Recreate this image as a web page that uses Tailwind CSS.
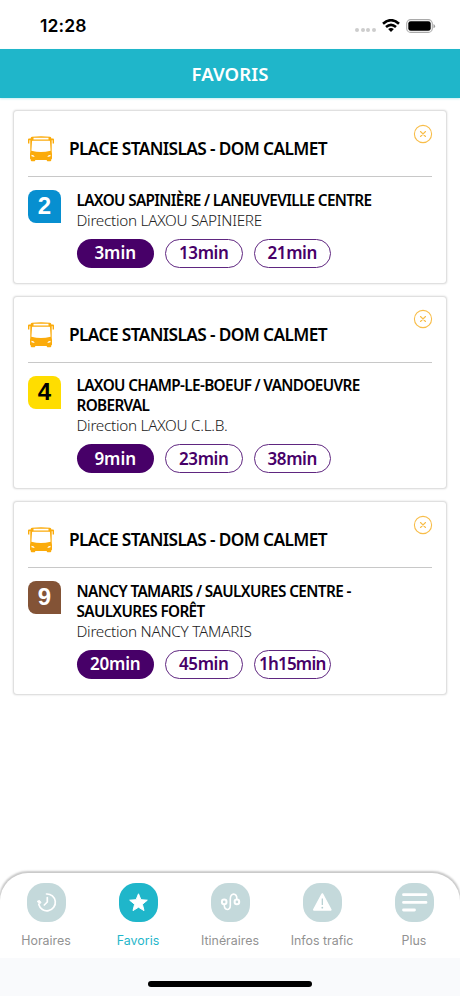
<!DOCTYPE html>
<html lang="fr">
<head>
<meta charset="utf-8">
<title>Favoris</title>
<script src="https://cdn.jsdelivr.net/npm/@tailwindcss/browser@4"></script>
</head>
<body class="bg-white">
<svg class="hidden">
  <symbol id="bus" viewBox="0 0 26 26">
    <path fill="currentColor" fill-rule="evenodd" d="M4 .8Q13-.5 22 .8Q23.3 1 23.4 2.4H25Q26 2.4 26 3.5V7.4H24.6V4.2H23.7V15.5L24 18V22.6Q24 23.3 23.2 23.5V24.5Q23.2 25.3 22.3 25.3H19.6Q18.8 25.3 18.7 23.9H7.3Q7.2 25.3 6.4 25.3H3.7Q2.8 25.3 2.8 24.5V23.5Q2 23.3 2 22.6V18L2.3 15.5V4.2H1.4V7.4H0V3.5Q0 2.4 1 2.4H2.6Q2.7 1 4 .8ZM5.5 1.7V3.6H20.5V1.7ZM4.5 4.7Q4 4.7 4 5.4L3.4 14.8Q13 17.2 22.6 14.8L22 5.4Q22 4.7 21.5 4.7ZM3.5 18.8V20.3L6.5 21Q6.8 19.3 3.5 18.8ZM22.5 18.8V20.3L19.5 21Q19.2 19.3 22.5 18.8Z"/>
  </symbol>
  <symbol id="close" viewBox="0 0 20 20">
    <g fill="none" stroke="currentColor" stroke-width="1.1"><circle cx="10" cy="10" r="8.6"/><path d="M7.5 7.5l5 5M12.5 7.5l-5 5" stroke-linecap="round"/></g>
  </symbol>
</svg>
<div class="w-[460px] h-[996px] overflow-hidden flex flex-col bg-white font-['Noto_Sans',sans-serif] text-black">
  <div class="h-[49px] shrink-0 flex items-center pl-10 pr-6 pt-[2px]">
    <span class="font-['Inter',sans-serif] font-semibold text-[17.5px] leading-5 tracking-[0.1px]">12:28</span>
    <div class="ml-auto flex items-center">
      <div class="flex gap-[1.6px] mt-[9px] mr-[6px]">
        <i class="size-1 rounded-full bg-[#cdcdcd]"></i><i class="size-1 rounded-full bg-[#cdcdcd]"></i><i class="size-1 rounded-full bg-[#cdcdcd]"></i><i class="size-1 rounded-full bg-[#cdcdcd]"></i>
      </div>
      <svg class="w-[18px] h-[13px] mr-[6px]" viewBox="0 0 18 13"><g fill="none" stroke="#000" stroke-width="2.6"><path d="M1 4.8Q9-2.4 17 4.8"/><path d="M4 8Q9 3.6 14 8"/></g><path d="M6.1 10Q9 7.8 11.9 10L9 12.9Z"/></svg>
      <svg class="w-[30px] h-[14px]" viewBox="0 0 30 14"><rect x=".7" y=".6" width="25.6" height="12.8" rx="4" fill="none" stroke="#aaa" stroke-width="1.1"/><rect x="2.3" y="2.2" width="22.4" height="9.6" rx="2.4"/><path d="M27.5 5v4.3q1.6-.6 1.6-2.1T27.5 5z" fill="#999"/></svg>
    </div>
  </div>
  <header class="h-[49px] shrink-0 bg-[#1fb6ca] flex items-center justify-center text-white font-semibold text-[18.5px] shadow-[0_1px_2px_rgba(31,182,202,0.25)]"><span class="tracking-[0.1px]">FAVORIS</span></header>
  <main class="grow px-[14px] pt-[13px] flex flex-col gap-[14px]">

    <section class="h-[171.5px] rounded-[3px] bg-white shadow-[0_0_2px_0.5px_rgba(0,0,0,0.17)] px-[14px] relative">
      <svg class="absolute right-[13px] top-[12.5px] size-5 text-[#f8bd49]"><use href="#close"/></svg>
      <div class="h-[66px] border-b border-[#c8c8c8] flex items-center pt-[11px]">
        <svg class="size-[26px] mr-[15px] text-[#fbab0b]"><use href="#bus"/></svg>
        <h2 class="font-semibold text-[17.3px] whitespace-nowrap tracking-[-0.62px]">PLACE STANISLAS - DOM CALMET</h2>
      </div>
      <div class="flex pt-[13px]">
        <div class="size-[33px] mr-[15.5px] shrink-0 rounded-[8px] rounded-br-none bg-[#078fd0] text-white font-['Liberation_Sans',sans-serif] font-bold text-[24px] flex items-center justify-center pb-[1px]">2</div>
        <div class="text-[15.3px] leading-5 whitespace-nowrap -mt-[0.5px]">
          <div class="font-semibold"><span class="tracking-[-0.65px]">LAXOU SAPINIÈRE / LANEUVEVILLE CENTRE</span></div>
          <div class="font-light text-[#222]"><span class="tracking-[-0.27px]">Direction LAXOU SAPINIERE</span></div>
          <div class="flex gap-[11px] mt-[9px] text-[17px] font-semibold text-[#470068]">
            <span class="w-[77.5px] h-[29px] rounded-full bg-[#470068] text-white flex items-center justify-center">3min</span>
            <span class="w-[77.5px] h-[29px] rounded-full border-[1.3px] border-[#5f2680] flex items-center justify-center tracking-[-0.4px]">13min</span>
            <span class="w-[77.5px] h-[29px] rounded-full border-[1.3px] border-[#5f2680] flex items-center justify-center tracking-[-0.4px]">21min</span>
          </div>
        </div>
      </div>
    </section>

    <section class="h-[191.5px] rounded-[3px] bg-white shadow-[0_0_2px_0.5px_rgba(0,0,0,0.17)] px-[14px] relative">
      <svg class="absolute right-[13px] top-[12.5px] size-5 text-[#f8bd49]"><use href="#close"/></svg>
      <div class="h-[66px] border-b border-[#c8c8c8] flex items-center pt-[11px]">
        <svg class="size-[26px] mr-[15px] text-[#fbab0b]"><use href="#bus"/></svg>
        <h2 class="font-semibold text-[17.3px] whitespace-nowrap tracking-[-0.62px]">PLACE STANISLAS - DOM CALMET</h2>
      </div>
      <div class="flex pt-[13px]">
        <div class="size-[33px] mr-[15.5px] shrink-0 rounded-[8px] rounded-br-none bg-[#ffdd00] text-black font-['Liberation_Sans',sans-serif] font-bold text-[24px] flex items-center justify-center pb-[1px]">4</div>
        <div class="text-[15.3px] leading-5 whitespace-nowrap -mt-[0.5px]">
          <div class="font-semibold"><span class="tracking-[-0.65px]">LAXOU CHAMP-LE-BOEUF / VANDOEUVRE</span><br><span class="tracking-[-0.65px]">ROBERVAL</span></div>
          <div class="font-light text-[#222]"><span class="tracking-[-0.27px]">Direction LAXOU C.L.B.</span></div>
          <div class="flex gap-[11px] mt-[9px] text-[17px] font-semibold text-[#470068]">
            <span class="w-[77.5px] h-[29px] rounded-full bg-[#470068] text-white flex items-center justify-center">9min</span>
            <span class="w-[77.5px] h-[29px] rounded-full border-[1.3px] border-[#5f2680] flex items-center justify-center tracking-[-0.4px]">23min</span>
            <span class="w-[77.5px] h-[29px] rounded-full border-[1.3px] border-[#5f2680] flex items-center justify-center tracking-[-0.4px]">38min</span>
          </div>
        </div>
      </div>
    </section>

    <section class="h-[191.5px] rounded-[3px] bg-white shadow-[0_0_2px_0.5px_rgba(0,0,0,0.17)] px-[14px] relative">
      <svg class="absolute right-[13px] top-[12.5px] size-5 text-[#f8bd49]"><use href="#close"/></svg>
      <div class="h-[66px] border-b border-[#c8c8c8] flex items-center pt-[11px]">
        <svg class="size-[26px] mr-[15px] text-[#fbab0b]"><use href="#bus"/></svg>
        <h2 class="font-semibold text-[17.3px] whitespace-nowrap tracking-[-0.62px]">PLACE STANISLAS - DOM CALMET</h2>
      </div>
      <div class="flex pt-[13px]">
        <div class="size-[33px] mr-[15.5px] shrink-0 rounded-[8px] rounded-br-none bg-[#835336] text-white font-['Liberation_Sans',sans-serif] font-bold text-[24px] flex items-center justify-center pb-[1px]">9</div>
        <div class="text-[15.3px] leading-5 whitespace-nowrap -mt-[0.5px]">
          <div class="font-semibold"><span class="tracking-[-0.6px]">NANCY TAMARIS / SAULXURES CENTRE -</span><br><span class="tracking-[-0.65px]">SAULXURES FORÊT</span></div>
          <div class="font-light text-[#222]"><span class="tracking-[-0.27px]">Direction NANCY TAMARIS</span></div>
          <div class="flex gap-[11px] mt-[9px] text-[17px] font-semibold text-[#470068]">
            <span class="w-[77.5px] h-[29px] rounded-full bg-[#470068] text-white flex items-center justify-center tracking-[-0.2px]">20min</span>
            <span class="w-[77.5px] h-[29px] rounded-full border-[1.3px] border-[#5f2680] flex items-center justify-center tracking-[-0.4px]">45min</span>
            <span class="w-[77.5px] h-[29px] rounded-full border-[1.3px] border-[#5f2680] flex items-center justify-center tracking-[-0.8px]">1h15min</span>
          </div>
        </div>
      </div>
    </section>
  </main>

  <nav class="h-[85px] shrink-0 rounded-t-[28px] bg-white shadow-[0_-1px_2px_0.5px_rgba(0,0,0,0.22)] grid grid-cols-5 pt-[10px] font-['Inter',sans-serif] text-[12.4px] leading-4 text-[#929292]">
    <div class="flex flex-col items-center gap-[11px]">
      <svg class="size-[39px]" viewBox="0 0 39 39"><rect width="39" height="39" rx="17" fill="#c4d9db"/><g fill="none" stroke="#fff" stroke-width="1.7" stroke-linecap="round"><path d="M19.5 11A8.4 8.4 0 1 1 11.8 21.5"/><path d="M20.3 14.5V19L17.3 22"/></g><path d="M10.3 18.2l2.2-.8 1.6 2.2-1.8 1.4z" fill="#fff" stroke="#fff" stroke-linejoin="round"/></svg>
      <span>Horaires</span>
    </div>
    <div class="flex flex-col items-center gap-[11px] text-[#1fb6ca]">
      <svg class="size-[39px]" viewBox="0 0 39 39"><rect width="39" height="39" rx="17" fill="#1fb6ca"/><path fill="#fff" stroke="#fff" stroke-linejoin="round" d="M19.5 10.8l2.4 5.9 6.4.5-4.9 4.1 1.6 6.3-5.5-3.4-5.5 3.4 1.6-6.3-4.9-4.1 6.4-.5z"/></svg>
      <span>Favoris</span>
    </div>
    <div class="flex flex-col items-center gap-[11px]">
      <svg class="size-[39px]" viewBox="0 0 39 39"><rect width="39" height="39" rx="17" fill="#c4d9db"/><g fill="none" stroke="#fff" stroke-width="2"><circle cx="13.2" cy="18.9" r="2.3"/><circle cx="25.9" cy="18.9" r="2.3"/><path d="M13.2 21.5C13.2 28 19.3 28 19.3 22.5V16C19.3 9.5 25.9 9.5 25.9 16.2" stroke-width="1.6"/></g></svg>
      <span>Itinéraires</span>
    </div>
    <div class="flex flex-col items-center gap-[11px]">
      <svg class="size-[39px]" viewBox="0 0 39 39"><rect width="39" height="39" rx="17" fill="#c4d9db"/><path d="M19.3 11.2L27.6 26.8H11z" fill="#fff" stroke="#fff" stroke-width="2" stroke-linejoin="round"/><path d="M19.3 15.5V22" stroke="#b2cdd0" stroke-width="1.2"/><circle cx="19.3" cy="24.7" r=".9" fill="#b2cdd0"/></svg>
      <span class="whitespace-nowrap">Infos trafic</span>
    </div>
    <div class="flex flex-col items-center gap-[11px]">
      <svg class="size-[39px]" viewBox="0 0 39 39"><rect width="39" height="39" rx="17" fill="#c4d9db"/><path d="M8.5 11.7H31M8.5 19.4H31M8.5 27H19.5" stroke="#fff" stroke-width="2.8" stroke-linecap="round"/></svg>
      <span>Plus</span>
    </div>
  </nav>
  <div class="h-[38px] shrink-0 bg-[#f9fafc] flex justify-center pt-[23px]"><div class="w-[164px] h-[5.5px] rounded-full bg-black"></div></div>
</div>
</body>
</html>
